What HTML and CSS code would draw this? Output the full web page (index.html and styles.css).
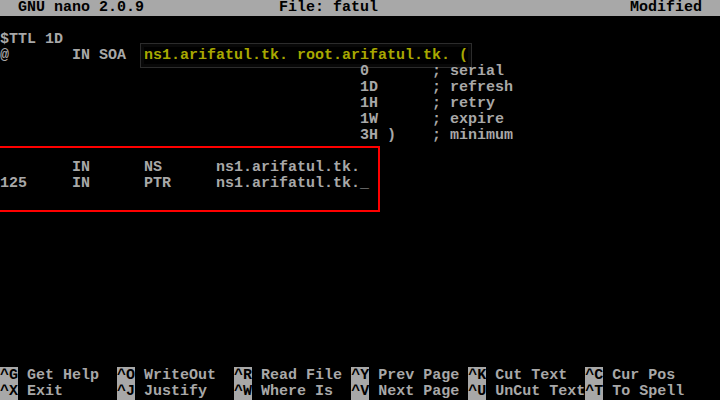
FILE: index.html
```html
<!DOCTYPE html>
<html>
<head>
<meta charset="UTF-8">
<title>GNU nano 2.0.9</title>
<link rel="stylesheet" href="styles.css">
</head>
<body>

<div class="screen">
	<div class="line title-bar">  GNU nano 2.0.9               File: fatul                            Modified  </div>
	<div class="line"> </div>
	<div class="line">$TTL 1D</div>
	<div class="line">@       IN SOA  <span class="mark">ns1.arifatul.tk. root.arifatul.tk. (</span></div>
	<div class="line">                                        0       ; serial</div>
	<div class="line">                                        1D      ; refresh</div>
	<div class="line">                                        1H      ; retry</div>
	<div class="line">                                        1W      ; expire</div>
	<div class="line">                                        3H )    ; minimum</div>
	<div class="line"> </div>
	<div class="line">        IN      NS      ns1.arifatul.tk.</div>
	<div class="line">125     IN      PTR     ns1.arifatul.tk.<span class="cursor">_</span></div>
	<div class="line"> </div>
	<div class="line"> </div>
	<div class="line"> </div>
	<div class="line"> </div>
	<div class="line"> </div>
	<div class="line"> </div>
	<div class="line"> </div>
	<div class="line"> </div>
	<div class="line"> </div>
	<div class="line"> </div>
	<div class="line"> </div>
	<div class="line"><span class="key">^G</span> Get Help  <span class="key">^O</span> WriteOut  <span class="key">^R</span> Read File <span class="key">^Y</span> Prev Page <span class="key">^K</span> Cut Text  <span class="key">^C</span> Cur Pos</div>
	<div class="line"><span class="key">^X</span> Exit      <span class="key">^J</span> Justify   <span class="key">^W</span> Where Is  <span class="key">^V</span> Next Page <span class="key">^U</span> UnCut Text<span class="key">^T</span> To Spell</div>

	<!-- red annotation box drawn over the screenshot -->
	<div class="red-box"></div>
</div>

</body>
</html>
```

FILE: styles.css
```css
/* *** Page *** */
html, body {
	margin: 0;
	background: #000;
}

/* *** 80x25 console *** */
.screen {
	position: relative;
	width: 720px;
	height: 400px;
	overflow: hidden;
	background: #000;
	color: #a8a8a8;
	font-family: "Liberation Mono", "DejaVu Sans Mono", monospace;
	font-size: 15px;
	font-weight: bold;
}

.line {
	height: 16px;
	line-height: 16px;
	white-space: pre;
}

.title-bar {
	background: #a8a8a8;
	color: #000;
}

/* *** Highlights *** */
.mark {
	color: #a8a800;
	box-shadow: 0 0 0 3px #080808, 0 0 0 4px #2c2c2c;
}

.key {
	background: #a8a8a8;
	color: #000;
}

.cursor {
	color: #a8a8a8;
}

/* *** Annotation *** */
.red-box {
	position: absolute;
	left: -10px;
	top: 146px;
	width: 386px;
	height: 62px;
	border: 2px solid #ff0000;
}
```
